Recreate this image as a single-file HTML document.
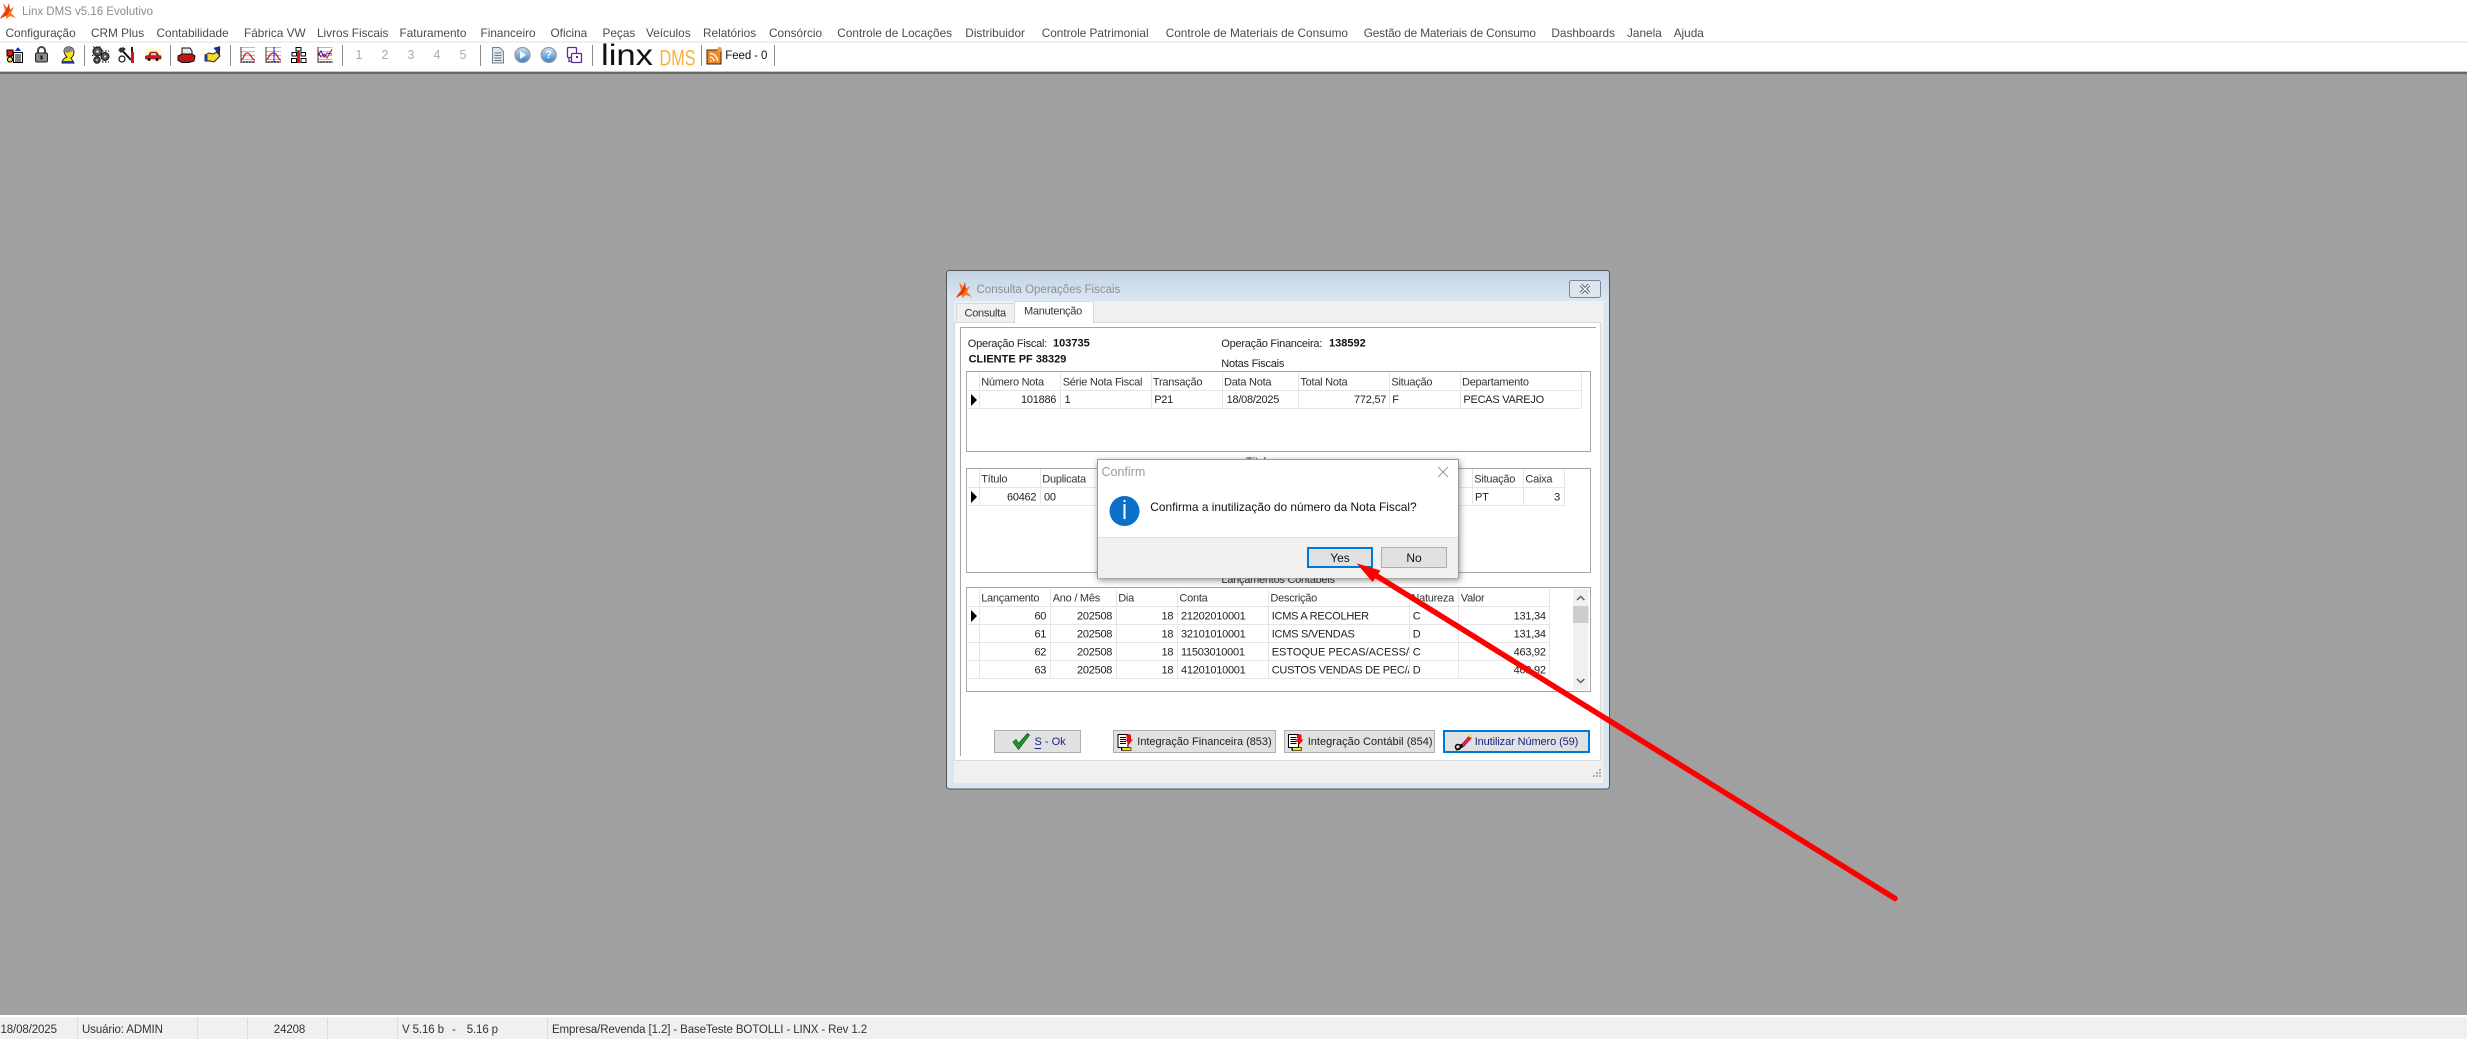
<!DOCTYPE html>
<html lang="pt"><head><meta charset="utf-8"><title>Linx DMS</title>
<style>
html,body{margin:0;padding:0;width:2467px;height:1039px;overflow:hidden;background:#a0a0a0}
svg{display:block;position:absolute;left:0;top:0}
text{font-family:"Liberation Sans",sans-serif;font-size:11px;letter-spacing:-.25px;fill:#222;dominant-baseline:central;white-space:pre}
.m{font-size:11.8px;letter-spacing:0;fill:#4a4a4a}
.b{font-weight:bold;font-size:11px;letter-spacing:0;fill:#111}
.h{fill:#333}
.r{text-anchor:end}
.n{font-size:12.5px;letter-spacing:0;fill:#aaa}
.s{font-size:11.5px;letter-spacing:-.12px;fill:#333}
.nv{fill:#1a2480}
.l{stroke:#e6e6e6;stroke-width:1;shape-rendering:crispEdges;fill:none}
.sep{stroke:#8c8c8c;stroke-width:1;shape-rendering:crispEdges;fill:none}
.ss{stroke:#dcdcdc;stroke-width:1;shape-rendering:crispEdges;fill:none}
.c{shape-rendering:crispEdges}
</style></head><body>
<svg width="2467" height="1039" viewBox="0 0 2467 1039" xmlns="http://www.w3.org/2000/svg">
<defs>
<linearGradient id="tg" x1="0" y1="0" x2="0" y2="1"><stop offset="0" stop-color="#c3d3e3"/><stop offset="1" stop-color="#dbe7f3"/></linearGradient>
<linearGradient id="pg" x1="0" y1="0" x2="0" y2="1"><stop offset="0" stop-color="#cfe3f7"/><stop offset="1" stop-color="#2f7fc8"/></linearGradient>
<filter id="ds" x="-10%" y="-10%" width="120%" height="125%"><feDropShadow dx="1" dy="2" stdDeviation="3.5" flood-color="#000" flood-opacity=".42"/></filter>
<clipPath id="cd"><rect x="1268" y="606" width="141" height="75"/></clipPath>
<g id="fx"><path d="M3 0l6 7 5-3-3 6 5 5-6-2-4 3 0-3-6 2 5-7z" fill="#f47a20"/><path d="M9 0L6 8 0 16l7-4 3-5z" fill="#e23a12"/></g>
<g id="doci"><rect x="0" y="0" width="10" height="13" fill="#fff" stroke="#000"/><path d="M2 3h6M2 5h6M2 7h6M2 9h6" stroke="#000"/><path d="M8 0h5v5l2 0-4 5-4-5h2z" fill="#e01010"/><rect x="3" y="13" width="1.5" height="3" fill="#000"/><rect x="4" y="13" width="9" height="3" fill="#f2e020" stroke="#000" stroke-width=".6"/></g>
</defs>

<!-- top chrome -->
<rect x="0" y="0" width="2467" height="72" fill="#fff"/>
<rect x="0" y="41" width="2467" height="2" fill="#f0f0f0"/>
<rect x="0" y="71" width="2467" height="1" fill="#c8c8c8"/>
<rect x="0" y="72" width="2467" height="2" fill="#666"/>
<use href="#fx" x="0" y="3"/>
<text x="22" y="12" style="font-size:11.5px;letter-spacing:0;fill:#8c8c8c">Linx DMS v5.16 Evolutivo</text>

<text class="m" x="5.5" y="33">Configuração</text>
<text class="m" x="91" y="33">CRM Plus</text>
<text class="m" x="156.5" y="33">Contabilidade</text>
<text class="m" x="244" y="33">Fábrica VW</text>
<text class="m" x="317" y="33">Livros Fiscais</text>
<text class="m" x="399.5" y="33">Faturamento</text>
<text class="m" x="480.500" y="33">Financeiro</text>
<text class="m" x="550.5" y="33">Oficina</text>
<text class="m" x="602.5" y="33">Peças</text>
<text class="m" x="646" y="33">Veículos</text>
<text class="m" x="703" y="33">Relatórios</text>
<text class="m" x="769" y="33">Consórcio</text>
<text class="m" x="837.3" y="33">Controle de Locações</text>
<text class="m" x="965.3" y="33">Distribuidor</text>
<text class="m" x="1041.7" y="33">Controle Patrimonial</text>
<text class="m" x="1165.7" y="33">Controle de Materiais de Consumo</text>
<text class="m" x="1363.7" y="33" style="letter-spacing:-.12px">Gestão de Materiais de Consumo</text>
<text class="m" x="1551.4" y="33">Dashboards</text>
<text class="m" x="1627" y="33">Janela</text>
<text class="m" x="1673.7" y="33">Ajuda</text>

<!-- toolbar separators -->
<path class="sep" d="M84.5 45V66M170.5 45V66M230.5 45V66M342.5 45V66M480.5 45V66M592.5 45V66M701.5 45V66M774.5 45V66"/>

<!-- icon 1 -->
<g class="c"><path d="M15 51l3-4 3 4z" fill="#1030c0"/><rect x="7" y="50" width="6" height="6" fill="#e01818" stroke="#000" stroke-width=".7"/><circle cx="10" cy="59.5" r="2.6" fill="#f5e020" stroke="#000"/><rect x="13.5" y="52.5" width="9" height="10" fill="#fff" stroke="#000"/><path d="M15 55h6M15 57h6M15 59h6M15 61h6" stroke="#000"/></g>
<!-- lock -->
<path d="M38 53v-2.5a3.5 3.5 0 0 1 7 0V53" fill="none" stroke="#444" stroke-width="2"/><rect x="35.5" y="53" width="12" height="9" rx="1.5" fill="#8a8a8a" stroke="#222"/><rect x="40.5" y="55.5" width="2" height="4" fill="#111"/>
<!-- head -->
<path d="M62 63c0-4 3-5 5-6-2-2-3-4-3-6 0-3 3-4.500 5-4 3 0 5 2 5 5 0 2-1 5-3 6l3 5z" fill="#f3e60f" stroke="#111" stroke-width=".9"/><path d="M64 51c0-3 3-4.500 5-4 3 0 5 2 5 4-2 0-3 1-5 1-1 2-3 1-5-1z" fill="#888"/><rect x="63" y="61" width="10" height="2" fill="#1836c8"/>
<!-- gears -->
<g fill="#555" stroke="#111"><circle cx="97.500" cy="51.500" r="4.500"/><circle cx="105" cy="56.500" r="4"/><circle cx="97" cy="60" r="3.200"/></g><g fill="#ddd"><circle cx="97.500" cy="51.500" r="1.300"/><circle cx="105" cy="56.500" r="1.100"/><circle cx="97" cy="60" r=".9"/></g><path d="M93 47h8M92 55.500h9M102 51h7M102 62h7" stroke="#222" stroke-width="1.300" stroke-dasharray="1.500 1.500"/>
<!-- tools -->
<path d="M120 48l11 12" stroke="#111" stroke-width="2"/><path d="M118 50l5-3 3 2-5 4z" fill="#333"/><rect x="131" y="52" width="3" height="11" fill="#cc1818"/><rect x="131" y="47" width="2" height="5" fill="#222"/><circle cx="122" cy="59" r="3" fill="none" stroke="#111" stroke-width="1.200"/>
<!-- car -->
<rect x="145" y="48.500" width="16" height="12" fill="#fff48c" opacity=".55"/><path d="M145.500 56l3-.5 2-3.500h6l2.500 3.500 2 .5v3h-15.500z" fill="#d81818" stroke="#222" stroke-width=".6"/><rect x="151" y="53" width="5" height="2.200" fill="#a8d8f0"/><circle cx="149" cy="59.500" r="1.500" fill="#111"/><circle cx="157" cy="59.500" r="1.500" fill="#111"/>
<!-- printer -->
<path d="M182 48h8l2 3v5h-10z" fill="#e8e8e8" stroke="#111"/><path d="M178 56l4-2 10 0 3 2-1 5-5 1.500h-7l-4-2z" fill="#c01818" stroke="#111"/>
<!-- handshake -->
<path d="M214 48l6-1.500-.5 9z" fill="#1c2ca0" stroke="#111" stroke-width=".5"/><path d="M205 55l4-2 4 1 4-2 3 4-6 6-4-1h-5z" fill="#f2d830" stroke="#111" stroke-width=".9"/><rect x="205" y="55" width="2.500" height="6" fill="#2838b0"/>
<!-- charts -->
<g fill="none"><path d="M241 47.500h14M241 51.500h14M241 55.500h14M241 59.500h14" stroke="#bbb"/><path d="M241 47v15h14M241 61v2M244 61v2M247 61v2M250 61v2M253 61v2" stroke="#333"/><path d="M241 60c3-1 3-7 6.500-7s4 7 7.500 7" stroke="#e01818" stroke-width="1.300"/>
<path d="M266 47.500h15M266 51.500h15M266 55.500h15M266 59.500h15" stroke="#bbb"/><path d="M266 47v15h15M266 61v2M269 61v2M272 61v2M275 61v2M278 61v2" stroke="#333"/><path d="M266 60c3-1 3-7 7.500-7s4 7 7.500 7" stroke="#e01818" stroke-width="1.300"/><path d="M274 47v15" stroke="#1818e0"/>
<path d="M317.500 47.500h15M317.500 51.500h15M317.500 55.500h15M317.500 59.500h15" stroke="#bbb"/><path d="M318 47v15h15M318 61v2M321 61v2M324 61v2M327 61v2M330 61v2" stroke="#333"/><path d="M318 52l3 5 3-3 3 4 5-9" stroke="#e01818" stroke-width="1.100"/><path d="M318 56l3-5 3 6 3-4 5 1" stroke="#1818e0"/></g>
<g class="c"><rect x="296" y="47.500" width="5" height="3.500" fill="#fff" stroke="#000"/><rect x="292" y="52.500" width="4.500" height="3.500" fill="#fff" stroke="#000"/><rect x="301" y="52.500" width="4.500" height="3.500" fill="#fff" stroke="#000"/><rect x="291.500" y="58.500" width="5" height="4" fill="#fff" stroke="#000"/><rect x="301" y="58.500" width="5" height="4" fill="#fff" stroke="#000"/><rect x="297" y="51" width="3" height="12" fill="#e81010"/></g>
<!-- numbers -->
<text class="n" x="359" y="55" text-anchor="middle">1</text><text class="n" x="385" y="55" text-anchor="middle">2</text><text class="n" x="411" y="55" text-anchor="middle">3</text><text class="n" x="437" y="55" text-anchor="middle">4</text><text class="n" x="463" y="55" text-anchor="middle">5</text>
<!-- doc -->
<path d="M492.500 47.500h7l4 4v11.500h-11z" fill="#dfe5ee" stroke="#76808e"/><path d="M494.500 53h7M494.500 55.500h7M494.500 58h7M494.500 60.500h7" stroke="#6c7684"/>
<!-- play / help -->
<circle cx="522.500" cy="55" r="7.500" fill="url(#pg)" stroke="#9a9a9a" stroke-width="1.300"/><path d="M520 51l6 4-6 4z" fill="#fff"/>
<circle cx="548.700" cy="55" r="7.500" fill="url(#pg)" stroke="#9a9a9a" stroke-width="1.300"/><text x="548.700" y="55" text-anchor="middle" style="font-size:11px;letter-spacing:0;font-weight:bold;fill:#fff">?</text>
<!-- purple -->
<g fill="none" stroke="#5a2ca0" stroke-width="1.300"><rect x="567.500" y="47.500" width="9" height="10" rx="1"/><rect x="571.500" y="53.500" width="10" height="9" rx="1" fill="#fff"/><path d="M569 57.500v4h2"/></g><rect x="576" y="56" width="2" height="2" fill="#5a2ca0"/>
<!-- logo -->
<text x="601" y="55.500" textLength="52" lengthAdjust="spacingAndGlyphs" style="font-size:30px;letter-spacing:0;fill:#111">linx</text>
<text x="659.500" y="58" textLength="36" lengthAdjust="spacingAndGlyphs" style="font-size:22px;letter-spacing:0;fill:#fbb034">DMS</text>
<!-- feed -->
<rect x="707" y="50" width="14" height="14" fill="#f08a24" stroke="#3c2410"/><path d="M710 61h1.500M710 57a4 4 0 0 1 4 4M710 53.500a7.500 7.500 0 0 1 7.500 7.500" stroke="#fff" stroke-width="1.300" fill="none"/><circle cx="719.500" cy="49.500" r="2.500" fill="#e8a050"/>
<text x="725.300" y="56" style="font-size:11.500px;letter-spacing:-.1px;fill:#111">Feed - 0</text>

<!-- status bar -->
<rect x="0" y="1015" width="2467" height="2" fill="#fff"/>
<rect x="0" y="1017" width="2467" height="22" fill="#f0f0f0"/>
<path class="ss" d="M77.500 1018V1039M197.500 1018V1039M247.500 1018V1039M327.500 1018V1039M397.500 1018V1039M547.500 1018V1039"/>
<text class="s" x="0.500" y="1030">18/08/2025</text>
<text class="s" x="82" y="1030">Usuário: ADMIN</text>
<text class="s" x="273.800" y="1030">24208</text>
<text class="s" x="402" y="1030">V 5.16 b</text>
<text class="s" x="452" y="1030">-</text>
<text class="s" x="466.700" y="1030">5.16 p</text>
<text class="s" x="552" y="1030">Empresa/Revenda [1.2] - BaseTeste BOTOLLI - LINX - Rev 1.2</text>

<!-- window -->
<rect x="946.500" y="270.500" width="663" height="518.500" rx="3" fill="#d9e5f2" stroke="#555"/>
<path d="M947 274a3 3 0 0 1 3-3h656a3 3 0 0 1 3 3v27H947z" fill="url(#tg)"/>
<use href="#fx" x="956" y="282" />
<text x="976.500" y="290" style="font-size:11.500px;letter-spacing:0;fill:#8f8f8f">Consulta Operações Fiscais</text>
<rect x="1569.500" y="280.500" width="31" height="17" rx="2" fill="#dde6ef" stroke="#7a8796"/>
<path d="M1581 285l8 8M1589 285l-8 8" stroke="#555" stroke-width="3.200"/><path d="M1581 285l8 8M1589 285l-8 8" stroke="#fff" stroke-width="1.300"/>
<rect x="954" y="301" width="649.500" height="482" fill="#f0f0f0" class="c"/>
<rect x="954.500" y="322.500" width="646" height="438" fill="#fff" stroke="#d9d9d9" class="c"/>
<rect x="956.500" y="303.500" width="58" height="19" fill="#f0f0f0" stroke="#d9d9d9" class="c"/>
<rect x="1014.500" y="301.500" width="79" height="21.500" fill="#fff" stroke="#d9d9d9" class="c"/>
<rect x="1015" y="320" width="78" height="4" fill="#fff"/>
<text x="964.500" y="313.500" class="h">Consulta</text>
<text x="1024" y="311.500" class="h">Manutenção</text>
<path d="M960.500 327.500H1596M960.500 327.500V756" stroke="#a5a5a5" class="c" fill="none"/>
<rect x="954" y="763" width="649.500" height="19" fill="#f0f0f0"/>
<g fill="#b4b4b4" class="c"><rect x="1599" y="769" width="2" height="2"/><rect x="1596" y="772" width="2" height="2"/><rect x="1599" y="772" width="2" height="2"/><rect x="1593" y="775" width="2" height="2"/><rect x="1596" y="775" width="2" height="2"/><rect x="1599" y="775" width="2" height="2"/></g>

<text x="967.800" y="344">Operação Fiscal:</text><text class="b" x="1053" y="343.500">103735</text>
<text x="1221.300" y="344">Operação Financeira:</text><text class="b" x="1329" y="343.500">138592</text>
<text class="b" x="968.600" y="359.700">CLIENTE PF 38329</text>
<text x="1221.300" y="364">Notas Fiscais</text>

<!-- grid 1 -->
<rect x="966.500" y="371.500" width="624" height="80" fill="#fff" stroke="#a5a5a5" class="c"/>
<path class="l" d="M968 390.500H1581.500M968 408.500H1581.500M979.500 372V408M1060.500 372V408M1151.500 372V408M1222.500 372V408M1298.500 372V408M1389.500 372V408M1460.500 372V408M1581.500 372V408"/>
<path d="M971 394l6 6-6 6z" fill="#000"/>
<g class="h"><text class="h" x="981.200" y="382.300">Número Nota</text><text class="h" x="1062.700" y="382.300">Série Nota Fiscal</text><text class="h" x="1152.900" y="382.300">Transação</text><text class="h" x="1224" y="382.300">Data Nota</text><text class="h" x="1300.400" y="382.300">Total Nota</text><text class="h" x="1391.400" y="382.300">Situação</text><text class="h" x="1462" y="382.300">Departamento</text></g>
<text class="r" x="1056.200" y="400">101886</text><text x="1064.500" y="400">1</text><text x="1154.200" y="400">P21</text><text x="1226.600" y="400">18/08/2025</text><text class="r" x="1386.200" y="400">772,57</text><text x="1392.300" y="400">F</text><text x="1463.400" y="400">PECAS VAREJO</text>

<text x="1245.700" y="462" class="h">Títulos</text>

<!-- grid 2 -->
<rect x="966.500" y="468.500" width="624" height="104" fill="#fff" stroke="#a5a5a5" class="c"/>
<path class="l" d="M968 487.500H1564.500M968 505.500H1564.500M979.500 469V505M1040.500 469V505M1472.500 469V505M1523.500 469V505M1564.500 469V505"/>
<path d="M971 491l6 6-6 6z" fill="#000"/>
<text class="h" x="981.200" y="479.300">Título</text><text class="h" x="1042.300" y="479.300">Duplicata</text><text class="h" x="1474.300" y="479.300">Situação</text><text class="h" x="1525.400" y="479.300">Caixa</text>
<text class="r" x="1036.300" y="497.300">60462</text><text x="1044" y="497.300">00</text><text x="1475" y="497.300">PT</text><text class="r" x="1560" y="497.300">3</text>

<text x="1221.400" y="580" class="h">Lançamentos Contabeis</text>

<!-- grid 3 -->
<rect x="966.500" y="587.500" width="624" height="104" fill="#fff" stroke="#a5a5a5" class="c"/>
<path class="l" d="M968 606.500H1549.500M968 624.500H1549.500M968 642.500H1549.500M968 660.500H1549.500M968 678.500H1549.500M979.500 589V678M1050.500 589V678M1116.500 589V678M1177.500 589V678M1268.500 589V678M1409.500 589V678M1458.500 589V678M1549.500 589V678"/>
<path d="M971 610l6 6-6 6z" fill="#000"/>
<text class="h" x="981.200" y="598.300">Lançamento</text><text class="h" x="1052.700" y="598.300">Ano / Mês</text><text class="h" x="1118.200" y="598.300">Dia</text><text class="h" x="1179.400" y="598.300">Conta</text><text class="h" x="1270.400" y="598.300">Descrição</text><text class="h" x="1411.400" y="598.300">Natureza</text><text class="h" x="1460.800" y="598.300">Valor</text>
<text class="r" x="1046.200" y="616.300">60</text><text class="r" x="1112.200" y="616.300">202508</text><text class="r" x="1173.300" y="616.300">18</text><text x="1181" y="616.300">21202010001</text><text clip-path="url(#cd)" x="1271.700" y="616.300">ICMS A RECOLHER</text><text x="1412.700" y="616.300">C</text><text class="r" x="1545.800" y="616.300">131,34</text>
<text class="r" x="1046.200" y="634.300">61</text><text class="r" x="1112.200" y="634.300">202508</text><text class="r" x="1173.300" y="634.300">18</text><text x="1181" y="634.300">32101010001</text><text clip-path="url(#cd)" x="1271.700" y="634.300">ICMS S/VENDAS</text><text x="1412.700" y="634.300">D</text><text class="r" x="1545.800" y="634.300">131,34</text>
<text class="r" x="1046.200" y="652.300">62</text><text class="r" x="1112.200" y="652.300">202508</text><text class="r" x="1173.300" y="652.300">18</text><text x="1181" y="652.300">11503010001</text><text clip-path="url(#cd)" x="1271.700" y="652.300" style="letter-spacing:0">ESTOQUE PECAS/ACESS/LUB</text><text x="1412.700" y="652.300">C</text><text class="r" x="1545.800" y="652.300">463,92</text>
<text class="r" x="1046.200" y="670.300">63</text><text class="r" x="1112.200" y="670.300">202508</text><text class="r" x="1173.300" y="670.300">18</text><text x="1181" y="670.300">41201010001</text><text clip-path="url(#cd)" x="1271.700" y="670.300">CUSTOS VENDAS DE PEC/AC</text><text x="1412.700" y="670.300">D</text><text class="r" x="1545.800" y="670.300">463,92</text>
<rect x="1573" y="589" width="15.500" height="101" fill="#f0f0f0"/>
<rect x="1573" y="606" width="15.500" height="17" fill="#cdcdcd"/>
<path d="M1577 600l3.700-3.500 3.700 3.500M1577 679l3.700 3.500 3.700-3.500" fill="none" stroke="#606060" stroke-width="1.500"/>

<!-- bottom buttons -->
<g class="c" fill="#e1e1e1" stroke="#adadad"><rect x="994.500" y="730.500" width="86" height="22"/><rect x="1113.500" y="730.500" width="162" height="22"/><rect x="1284.500" y="730.500" width="150" height="22"/></g>
<rect x="1444" y="731" width="145" height="21" fill="#e1e1e1" stroke="#0078d7" stroke-width="2" class="c"/>
<path d="M1013 742l3-2.500 2.500 4 9-10 2 1.500-11 14.500z" fill="#1a9a28" stroke="#0b4d12" stroke-width=".7"/>
<text class="nv" x="1034.500" y="742" style="letter-spacing:0">S - Ok</text><path d="M1034.500 748.500h6.500" stroke="#1a2480" class="c"/>
<use href="#doci" x="1118" y="734.500"/><text x="1137.300" y="742" style="letter-spacing:-.03px">Integração Financeira (853)</text>
<use href="#doci" x="1288.500" y="734.500"/><text x="1307.700" y="742" style="letter-spacing:.03px">Integração Contábil (854)</text>
<path d="M1461 745l8-9 2.500 2-8 9z" fill="#e8184a" stroke="#222" stroke-width=".5"/><path d="M1468 736l2-2 1.500 1.500-1 2.500z" fill="#f5e020"/><circle cx="1458" cy="747" r="2.500" fill="none" stroke="#000" stroke-width="1.500"/><path d="M1456 750l6-3-1-3" fill="none" stroke="#000" stroke-width="1.500"/>
<text class="nv" x="1474.700" y="742" style="letter-spacing:-.1px">Inutilizar Número (59)</text>

<!-- confirm dialog -->
<g filter="url(#ds)"><rect x="1097.500" y="459.500" width="361" height="118.500" fill="#fff" stroke="#9a9a9a" class="c"/></g>
<rect x="1098" y="537" width="360" height="41" fill="#f0f0f0" class="c"/>
<rect x="1098" y="537" width="360" height="1" fill="#dfdfdf"/>
<text x="1101.500" y="472" style="font-size:12.500px;letter-spacing:0;fill:#9a9a9a">Confirm</text>
<path d="M1438 467l10 10M1448 467l-10 10" stroke="#9a9a9a" stroke-width="1"/>
<circle cx="1124.500" cy="511" r="15" fill="#0a70c8"/><rect x="1123.500" y="504" width="2" height="15" fill="#fff"/><rect x="1123.500" y="500" width="2" height="2" fill="#fff"/>
<text x="1150.300" y="507" style="font-size:11.900px;letter-spacing:0;fill:#111">Confirma a inutilização do número da Nota Fiscal?</text>
<rect x="1308" y="548" width="64" height="19" fill="#e1e1e1" stroke="#0078d7" stroke-width="2" class="c"/>
<rect x="1381.500" y="547.500" width="65" height="20" fill="#e1e1e1" stroke="#adadad" class="c"/>
<text x="1340" y="557.800" text-anchor="middle" style="font-size:12px;letter-spacing:0;fill:#111">Yes</text>
<text x="1414" y="557.800" text-anchor="middle" style="font-size:12px;letter-spacing:0;fill:#111">No</text>

<!-- arrow -->
<path d="M1895 898.500L1372 573" stroke="#ff0000" stroke-width="5.500" stroke-linecap="round" fill="none"/>
<path d="M1356.500 563.300L1380.500 570.500L1372.500 582z" fill="#ff0000"/>
</svg>
</body></html>
